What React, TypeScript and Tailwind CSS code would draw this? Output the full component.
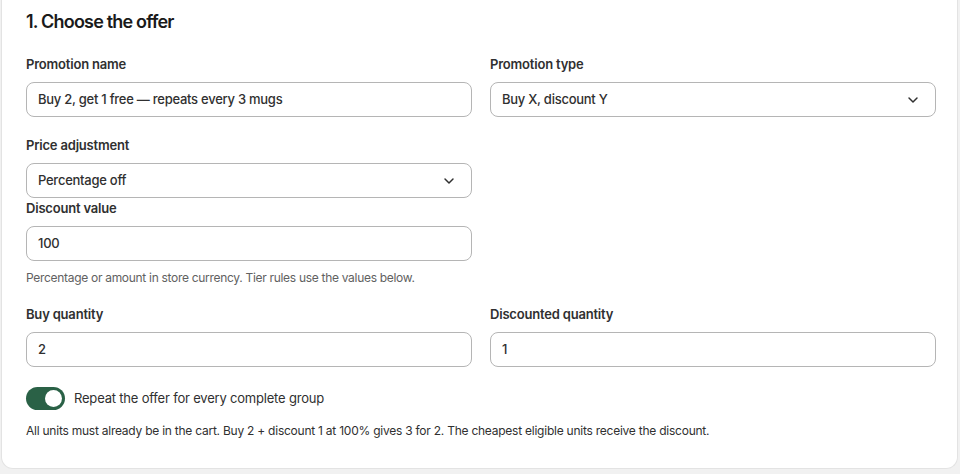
import { ChevronDown } from "lucide-react";

function Label({ children, className = "" }: { children: string; className?: string }) {
  return (
    <div className={`text-[13px] font-semibold leading-4 tracking-[-0.015em] text-[#303030] ${className}`}>{children}</div>
  );
}

function TextBox({ value }: { value: string }) {
  return (
    <div className="flex h-[35px] items-center rounded-lg border border-[#b5b5b5] bg-white px-[11px] text-[13px] font-medium tracking-[-0.02em] text-[#303030]">
      {value}
    </div>
  );
}

function SelectBox({ value }: { value: string }) {
  return (
    <div className="flex h-[35px] items-center justify-between rounded-lg border border-[#b5b5b5] bg-white pl-[11px] pr-[14px] text-[13px] font-medium tracking-[-0.02em] text-[#303030]">
      <span>{value}</span>
      <ChevronDown className="h-4 w-4 text-[#303030]" strokeWidth={2.2} />
    </div>
  );
}

function Field({ label, children, className = "" }: { label: string; children: React.ReactNode; className?: string }) {
  return (
    <div className={className}>
      <Label className="mb-[10px]">{label}</Label>
      {children}
    </div>
  );
}

export default function App() {
  return (
    <div className="min-h-[474px] bg-[#f1f1f1] pb-[7px] pr-[2px] pl-px font-['Inter',sans-serif]">
      <div className="rounded-b-xl border-x border-b border-[#e3e3e3] bg-white pl-[24px] pr-[21px] pt-[10px] pb-[29px]">
        <h2 className="text-[18px] font-semibold leading-6 tracking-[-0.045em] text-[#1a1a1a]">1. Choose the offer</h2>

        <div className="mt-[22px] grid grid-cols-2 gap-x-[18px]">
          <Field label="Promotion name">
            <TextBox value="Buy 2, get 1 free — repeats every 3 mugs" />
          </Field>
          <Field label="Promotion type">
            <SelectBox value="Buy X, discount Y" />
          </Field>

          <div className="mt-[20px]">
            <Field label="Price adjustment">
              <SelectBox value="Percentage off" />
            </Field>
            <Field label="Discount value" className="mt-[2px]">
              <TextBox value="100" />
            </Field>
            <p className="mt-[9px] text-[12px] leading-4 tracking-[-0.025em] text-[#616161]">
              Percentage or amount in store currency. Tier rules use the values below.
            </p>
          </div>
          <div />

          <Field label="Buy quantity" className="mt-[20px]">
            <TextBox value="2" />
          </Field>
          <Field label="Discounted quantity" className="mt-[20px]">
            <TextBox value="1" />
          </Field>
        </div>

        <label className="mt-[20px] flex items-center gap-[9px]">
          <span className="relative inline-flex h-[23px] w-[39px] items-center rounded-full bg-[#2a6146]">
            <span className="absolute right-[3px] h-[17px] w-[17px] rounded-full bg-white" />
          </span>
          <span className="text-[13px] tracking-[-0.015em] text-[#303030]">Repeat the offer for every complete group</span>
        </label>

        <p className="mt-[13px] text-[12px] leading-4 tracking-[-0.02em] text-[#303030]">
          All units must already be in the cart. Buy 2 + discount 1 at 100% gives 3 for 2. The cheapest eligible units
          receive the discount.
        </p>
      </div>
    </div>
  );
}
